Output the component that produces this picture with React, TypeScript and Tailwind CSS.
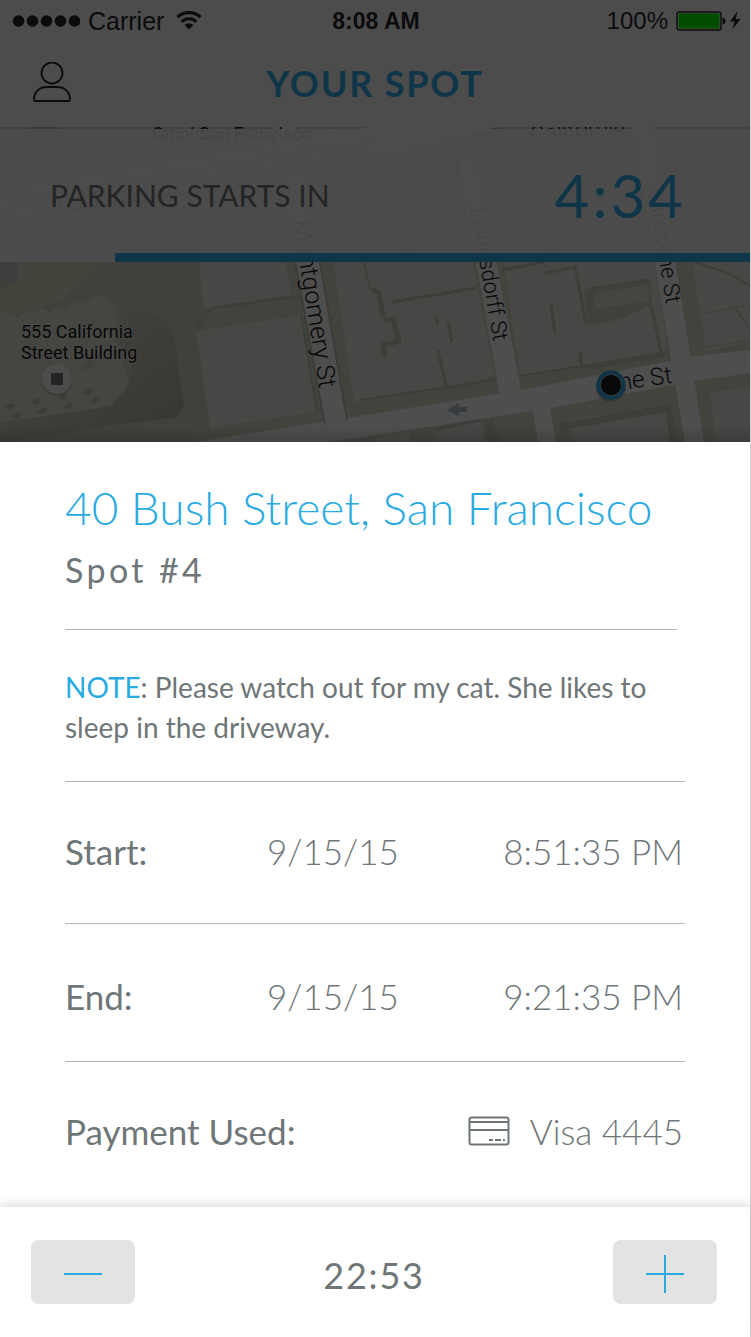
import React from "react";

function StatusBar() {
  return (
    <div className="grid h-[42px] grid-cols-3 items-center pr-2.5 pl-3 font-['Liberation_Sans',Arial,sans-serif] text-2xl leading-[42px] text-[#0b0b0d]">
      <div className="flex items-center gap-2">
        <svg width="68" height="14" viewBox="0 0 68 14" fill="#0b0b0d" aria-hidden="true">
          {[6, 20, 34, 48, 62].map((cx) => (
            <circle key={cx} cx={cx + 0.5} cy="7" r="5.8" />
          ))}
        </svg>
        <span className="text-[25px]">Carrier</span>
        <svg className="ml-1" width="26" height="20" viewBox="0 0 26 20" fill="none" stroke="#0b0b0d" aria-hidden="true">
          <path d="M1.5 6.200a16.5 16.5 0 0 1 23 0" strokeWidth="3.2" />
          <path d="M5.6 10.800a10.6 10.6 0 0 1 14.8 0" strokeWidth="3" />
          <path d="M13 18.500l-4.400-4.600a6.400 6.400 0 0 1 8.800 0z" fill="#0b0b0d" stroke="none" />
        </svg>
      </div>
      <div className="text-center text-[23px] font-bold">8:08 AM</div>
      <div className="flex items-center justify-end gap-2">
        <span>100%</span>
        <svg width="64" height="20" viewBox="0 0 64 20" aria-hidden="true">
          <rect x="1" y="1" width="44" height="18" rx="2" fill="none" stroke="#0b0b0d" strokeWidth="1.4" />
          <rect x="2.6" y="2.6" width="40.8" height="14.8" rx="0.8" fill="#004d00" />
          <path d="M46.5 6.5c4 .8 4 6.200 0 7z" fill="#0b0b0d" />
          <path d="M61.500 0L54 10.500h4.500l-2 8 8-10.500h-4.800z" fill="#0b0b0d" />
        </svg>
      </div>
    </div>
  );
}

function StreetMap() {
  return (
    <svg
      className="absolute inset-0 h-full w-full"
      viewBox="0 127 750 315"
      preserveAspectRatio="xMidYMin slice"
      role="img"
      aria-label="Map of the parking spot"
    >
      <defs>
        <linearGradient id="edge" x1="0" y1="0" x2="0" y2="1">
          <stop offset="0" stopColor="#000" stopOpacity="0" />
          <stop offset="1" stopColor="#000" stopOpacity="0.16" />
        </linearGradient>
        <linearGradient id="shade" x1="0" y1="0" x2="1" y2="1">
          <stop offset="0.3" stopColor="#41413e" />
          <stop offset="1" stopColor="#363733" />
        </linearGradient>
      </defs>
      <rect y="126" width="750" height="316" fill="#42433d" />
      <path d="M105 262H200L210 428L0 442V320Z" fill="#40403d" />

      <path d="M0 262H105L58 302L0 320Z" fill="#43443c" />
      <path d="M0 262H18V282L0 290Z" fill="#3e3f3c" />
      <path d="M98 294L128 306L162 318L172 326L175 342L180 380L184 405L176 418L120 424L60 434L0 442V380Z" fill="url(#shade)" />
      <path d="M0 442L60 436L195 420V432L195 442Z" fill="#41423c" />
      <path
        d="M0 318L12 314L17 319L27 310L33 315L42 307L50 312L58 305L65 309L74 302L82 304L98 294L116 307L114 314L119 322L114 330L131 370L127 387L114 402L112 405L88 410L60 414L0 422Z"
        fill="#454542"
      />
      <g fill="#3c3d39">
        {[0, 1, 2, 3].map((i) => (
          <path key={i} d={`M${4 + i * 26} ${408 - i * 5}l7-5 5 2-5 5zM${10 + i * 26} ${417 - i * 5}l8-5 4 3-6 4z`} />
        ))}
      </g>
      <path d="M114 330L119 322L133 372L127 378ZM80 372L92 352L96 366Z" fill="#40413c" />

      <g fill="#484745">
        <path d="M200 262H286L292 297L206 312L201 290Z" />
        <path d="M196 331L301 315L316 412L210 428Z" />
        <path d="M333 262H472L495 376L440 388L354 402Z" />
        <path d="M504 262H655L668 352L520 376Z" />
        <path d="M692 262H750V342L706 351Z" />
        <path d="M566 420L668 406L675 442H575Z" />
        <path d="M710 392L750 387V442H716Z" />
        <path d="M435 430L480 420L484 442H437ZM375 438L410 432L412 442H375Z" />
      </g>

      <g fill="none" stroke="#3d3d3a" strokeWidth="3">
        <path d="M206 312L214 308L290 297L298 299" />
        <path d="M197 318L199 331M301 315L317 412" strokeWidth="2" />
        <path d="M364 262l6 27M735 307l14 22" strokeWidth="1.500" />
        <path d="M392 302L476 288" />
        <path d="M372 289l7 4 4 24M384 320l9-1 6 22-16 4 2 12" strokeWidth="5" />
        <path d="M436 316l2 9M438 350l8 36M448 322l4 20M551 303l4 31M580 352l2 16" />
        <path d="M501 270L544 262M545 273L575 267L586 324M590 289L650 280M586 368L662 356L651 305" />
        <path d="M520 376L668 352M360 400L495 380" strokeWidth="2" />
        <path d="M706 347L750 340M706 313L745 306" strokeWidth="1" />
        <path d="M695 262l35 12 20 12" strokeWidth="2" />
        <path d="M560 427L668 408L674 442" strokeWidth="7" />
        <path d="M488 420l6 22" strokeWidth="9" />
        <path d="M434 430L484 419" strokeWidth="3" />
      </g>
      <path d="M584 290L650 282L652 304L624 318L588 326Z" fill="#40413d" />
      <path d="M594 293L648 285L650 301L596 309Z" fill="#454541" />

      <g fill="#3a3b37">
        <path d="M0 190L300 142L300 160L120 192L0 215Z" />
        <path d="M375 172L620 136L628 156L375 196Z" />
        <path d="M165 210L196 222L204 262H110Z" />
        <path d="M345 165L365 175L352 192Z" />
        <path d="M30 126L58 126L56 176L42 180Z" />
        <path d="M460 128h44v10h-44z" />
        <path d="M532 214h12l14 44h-14zM400 226l28-8v6l-20 8 6 26h-8z" />
      </g>
      <g fill="#4e4e4e">
        <path d="M0 190L375 126H500L375 160L0 222Z" />
        <path d="M273 126H295L347 421L325 425Z" />
        <path d="M458 160H477L521 390L500 396Z" />
        <path d="M632 126H654L704 442H685Z" />
        <path d="M195 442L347 418L521 390L695 356L750 350V373L695 381L552 408L330 442Z" />
        <path d="M532 408H550L556 442H538Z" />
      </g>
      <g fill="none" stroke="#3b3b39" strokeWidth="1.500">
        <path d="M0 200L375 142M0 210L375 152M0 222L375 160" />
        <path d="M270 126L325 425M297 126L347 421" />
      </g>
      <path d="M447 410l12-7v4h8v5h-8v4z" fill="#353b3e" />

      <g fill="#070707" fontFamily="Roboto, sans-serif" fontSize="22">
        <text transform="translate(293 221) rotate(81)" fontSize="25" fontWeight="300">Montgomery St</text>
        <text transform="translate(470 209) rotate(80)" fontWeight="300">Leidesdorff St</text>
        <text transform="translate(648 189) rotate(81)" fontWeight="300">Sansome St</text>
        <text transform="translate(600 393) rotate(-8)" fontSize="24" fontWeight="300">Pine St</text>
        <text transform="translate(58 213) rotate(-8)" fontWeight="300">California St</text>
        <text transform="translate(531 143) rotate(-7)" fontSize="23" fontWeight="300">California</text>
        <text x="152" y="140" fontSize="18">Omni San Francisco</text>
        <g stroke="#484846" strokeWidth="2" paintOrder="stroke" fontSize="18">
          <text x="21" y="338">555 California</text>
          <text x="21" y="359">Street Building</text>
        </g>
      </g>

      <circle cx="57" cy="380" r="15.500" fill="#3a3a38" />
      <circle cx="57" cy="379" r="15" fill="#4c4c4c" />
      <rect x="51" y="373" width="12" height="12" fill="#242424" />

      <circle cx="611" cy="387" r="15" fill="#363734" />
      <circle cx="611" cy="385" r="12.600" fill="#08090b" stroke="#0e3548" strokeWidth="4" />
      <circle cx="611" cy="385" r="10.600" fill="none" stroke="#3c4144" strokeWidth="0.800" />
      <rect y="426" width="750" height="16" fill="url(#edge)" />
    </svg>
  );
}

function Row({ label, date, value }: { label: string; date: string; value: string }) {
  return (
    <div className="grid grid-cols-[202px_1fr_auto] items-center pr-0.5 text-[35px] leading-[44px]">
      <dt>{label}</dt>
      <dd className="font-light">{date}</dd>
      <dd className="font-light">{value}</dd>
    </div>
  );
}

export default function App() {
  return (
    <div className="flex min-h-screen flex-col border-r border-[#d4d4d4] bg-white font-['Lato',sans-serif] text-[#6f7678]">
      <header className="h-[127px] bg-[#4c4c4c]">
        <StatusBar />
        <div className="grid grid-cols-[1fr_auto_1fr] items-center px-8">
          <button type="button" aria-label="Profile" className="my-5 w-10">
            <svg width="40" height="42" viewBox="0 0 40 42" fill="none" stroke="#0a0b0e" strokeWidth="1.800">
              <circle cx="20" cy="11" r="10.500" />
              <path d="M2 37.500C2 29 8 25 15 25h10c7 0 13 4 13 12.500 0 .9-.7 1.500-1.500 1.500h-33C2.700 39 2 38.400 2 37.500z" />
            </svg>
          </button>
          <h1 className="text-4xl leading-[44px] font-bold tracking-wider text-[#0e3548]">YOUR SPOT</h1>
        </div>
      </header>

      <section className="relative h-[315px] overflow-hidden">
        <StreetMap />
        <div className="relative pt-0.5">
          <div className="flex h-[124px] items-center justify-between bg-[#4c4c4c]/90 pt-2 pr-16 pl-[50px]">
            <span className="text-3xl text-[#242424]">PARKING STARTS IN</span>
            <span className="text-6xl leading-[64px] tracking-wider text-[#0e3548]">4:34</span>
          </div>
          <div className="flex h-[9px] justify-end bg-[#4c4c4c]">
            <div className="w-[635px] bg-[#0e3548]" />
          </div>
        </div>
      </section>

      <main className="flex-1 px-[65px] pt-[38px]">
        <h2 className="text-[46px] leading-[56px] font-light text-[#29abe2]">40 Bush Street, San Francisco</h2>
        <p className="mt-3 text-[34px] leading-[44px] tracking-widest">Spot #4</p>
        <hr className="mt-[37px] mr-2 border-[#b5b5b5]" />
        <p className="mt-[37px] text-[28px] leading-10">
          <span className="text-[#29abe2]">NOTE</span>: Please watch out for my cat. She likes to sleep in the driveway.
        </p>
        <hr className="mt-[34px] border-[#b5b5b5]" />
        <dl>
          <div className="flex h-[141px] flex-col justify-center pb-1">
            <Row label="Start:" date="9/15/15" value="8:51:35 PM" />
          </div>
          <hr className="border-[#b5b5b5]" />
          <div className="flex h-[137px] flex-col justify-center pt-1.5">
            <Row label="End:" date="9/15/15" value="9:21:35 PM" />
          </div>
          <hr className="border-[#b5b5b5]" />
          <div className="flex h-[141px] items-center justify-between pr-0.5 pb-1 text-[35px] leading-[44px]">
            <dt>Payment Used:</dt>
            <dd className="flex items-center gap-5 font-light">
              <svg width="42" height="30" viewBox="0 0 42 30" fill="none" stroke="#6f7678" strokeWidth="2" aria-hidden="true">
                <rect x="1.500" y="1.500" width="39" height="27" rx="2" />
                <path d="M1 6h40M1 14h40" />
                <path d="M21 24h4M27 24h6M35 24h2" />
              </svg>
              <span>Visa 4445</span>
            </dd>
          </div>
        </dl>
      </main>

      <footer className="flex h-[130px] items-center justify-between bg-white pr-[33px] pl-[31px] shadow-[0_-2px_10px_rgba(60,70,70,0.22)]">
        <button type="button" aria-label="Less time" className="flex h-16 w-[104px] items-center justify-center rounded-lg bg-[#e3e3e3]">
          <svg width="38" height="38" viewBox="0 0 38 38" stroke="#29abe2" strokeWidth="2">
            <path d="M0 21H38" />
          </svg>
        </button>
        <span className="pt-1.5 text-4xl leading-[44px] tracking-wider">22:53</span>
        <button type="button" aria-label="More time" className="flex h-16 w-[104px] items-center justify-center rounded-lg bg-[#e3e3e3]">
          <svg className="overflow-visible" width="38" height="38" viewBox="0 0 38 38" stroke="#29abe2" strokeWidth="2">
            <path d="M0 21H38M19 2V40" />
          </svg>
        </button>
      </footer>
    </div>
  );
}
